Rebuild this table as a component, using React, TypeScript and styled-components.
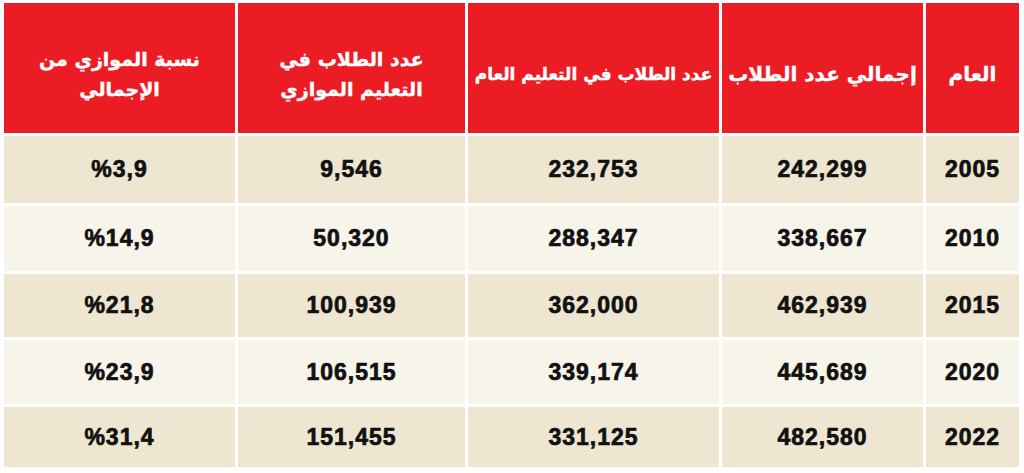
import React from "react";
import styled, { createGlobalStyle } from "styled-components";

const Global = createGlobalStyle`
  html, body { margin: 0; padding: 0; background: #ffffff; }
  body { width: 1024px; height: 473px; overflow: hidden; }
`;

const Page = styled.div`
  padding: 3px 5px 6px 4px;
  background: #ffffff;
`;

const Table = styled.div`
  direction: rtl;
  display: grid;
  width: 1015px;
  grid-template-columns: 93px 201px 251px 227px 231px;
  grid-template-rows: 130px 67px 65px 63px 64px 60px;
  gap: 3px;
  background: #ffffff;
`;

const HeadCell = styled.div<{ $size: number }>`
  background: #ec1c24;
  color: #ffffff;
  display: flex;
  align-items: center;
  justify-content: center;
  text-align: center;
  font-family: "DejaVu Sans", "Noto Sans", sans-serif;
  font-weight: bold;
  font-size: ${(p) => p.$size}px;
  line-height: 30px;
  padding: 12px 4px 0;
  white-space: nowrap;
  -webkit-text-stroke: 0.4px #ffffff;
`;

const DataCell = styled.div<{ $alt: boolean }>`
  background: ${(p) => (p.$alt ? "#f7f4e9" : "#eee6d0")};
  color: #111111;
  display: flex;
  align-items: center;
  justify-content: center;
  direction: ltr;
  font-family: "Liberation Sans", Arial, sans-serif;
  font-weight: bold;
  font-size: 23px;
  letter-spacing: 1px;
  -webkit-text-stroke: 0.7px #111111;
`;

const headers: { lines: string[]; size: number }[] = [
  { lines: ["العام"], size: 20 },
  { lines: ["إجمالي عدد الطلاب"], size: 20 },
  { lines: ["عدد الطلاب في التعليم العام"], size: 17 },
  { lines: ["عدد الطلاب في", "التعليم الموازي"], size: 19 },
  { lines: ["نسبة الموازي من", "الإجمالي"], size: 19 },
];

const rows: string[][] = [
  ["2005", "242,299", "232,753", "9,546", "%3,9"],
  ["2010", "338,667", "288,347", "50,320", "%14,9"],
  ["2015", "462,939", "362,000", "100,939", "%21,8"],
  ["2020", "445,689", "339,174", "106,515", "%23,9"],
  ["2022", "482,580", "331,125", "151,455", "%31,4"],
];

export default function App() {
  return (
    <>
      <Global />
      <Page>
        <Table>
          {headers.map((h, i) => (
            <HeadCell key={i} $size={h.size}>
              <span>
                {h.lines.map((l, li) => (
                  <React.Fragment key={li}>
                    {li > 0 && <br />}
                    {l}
                  </React.Fragment>
                ))}
              </span>
            </HeadCell>
          ))}
          {rows.map((r, ri) =>
            r.map((v, ci) => (
              <DataCell key={`${ri}-${ci}`} $alt={ri % 2 === 1}>
                {v}
              </DataCell>
            ))
          )}
        </Table>
      </Page>
    </>
  );
}
